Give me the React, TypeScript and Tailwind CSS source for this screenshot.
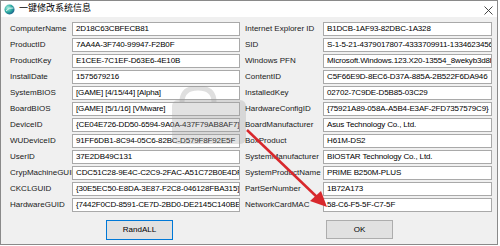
// App.tsx
const left = [
  ["ComputerName", "2D18C63CBFECB81"],
  ["ProductID", "7AA4A-3F740-99947-F2B0F"],
  ["ProductKey", "E1CEE-7C1EF-D63E6-4E10B"],
  ["InstallDate", "1575679216"],
  ["SystemBIOS", "[GAME] [4/15/44] [Alpha]"],
  ["BoardBIOS", "[GAME] [5/1/16] [VMware]"],
  ["DeviceID", "{CE04E726-DD50-6594-9A0A-437F79AB8AF7}"],
  ["WUDeviceID", "91FF6DB1-8C94-05C6-82BC-D579F8F92E5F"],
  ["UserID", "37E2DB49C131"],
  ["CrypMachineGUID", "CDC51C28-9E4C-C2C9-2FAC-A51C72B0E4DF"],
  ["CKCLGUID", "{30E5EC50-E8DA-3E87-F2C8-046128FBA315}"],
  ["HardwareGUID", "{7442F0CD-8591-CE7D-2BD0-DE2145C140BE}"],
];

const right = [
  ["Internet Explorer ID", "B1DCB-1AF93-82DBC-1A328"],
  ["SID", "S-1-5-21-4379017807-4333709911-1334623456"],
  ["Windows PFN", "Microsoft.Windows.123.X20-13554_8wekyb3d8bbwe"],
  ["ContentID", "C5F66E9D-8EC6-D37A-885A-2B522F6DA946"],
  ["InstalledKey", "02702-7C9DE-D5B85-03C29"],
  ["HardwareConfigID", "{75921A89-058A-A5B4-E3AF-2FD7357579C9}"],
  ["BoardManufacturer", "Asus Technology Co., Ltd."],
  ["BoxProduct", "H61M-DS2"],
  ["SystemManufacturer", "BIOSTAR Technology Co., Ltd."],
  ["SystemProductName", "PRIME B250M-PLUS"],
  ["PartSerNumber", "1B72A173"],
  ["NetworkCardMAC", "58-C6-F5-5F-C7-5F"],
];

function Field({ label, value, labelW, inputW }: { label: string; value: string; labelW: string; inputW: string }) {
  return (
    <div className="flex items-center h-[14px]">
      <div className={`${labelW} shrink-0 whitespace-nowrap text-[#1a1a1a]`}>{label}</div>
      <div className={`${inputW} relative h-[14px] shrink-0 bg-white border border-[#a9a9a9] pl-[3px] leading-[12px] whitespace-nowrap overflow-hidden text-black tracking-[-0.15px]`}>
        {value}
      </div>
    </div>
  );
}

export default function App() {
  return (
    <div className="relative w-[500px] h-[246px] bg-white overflow-hidden text-[8px]" style={{ fontFamily: '"Liberation Sans", "Noto Sans CJK SC", sans-serif' }}>
      <div className="w-[498px] h-[245px] border border-[#8a8a8a] flex flex-col">
        {/* title bar */}
        <div className="h-[16px] bg-white flex items-center pl-[3px] pr-[4px]">
          <svg width="11" height="11" viewBox="0 0 11 11" className="shrink-0">
            <defs>
              <radialGradient id="g" cx="35%" cy="35%" r="70%">
                <stop offset="0" stopColor="#a8f0e0" />
                <stop offset="0.6" stopColor="#2aa8a0" />
                <stop offset="1" stopColor="#1a5f8a" />
              </radialGradient>
            </defs>
            <circle cx="5.5" cy="5.5" r="5" fill="url(#g)" />
            <path d="M2 7 Q5 3 9.5 4" stroke="#ffffff" strokeWidth="1" fill="none" opacity="0.8" />
          </svg>
          <span className="ml-[4px] text-[9px] text-black">一键修改系统信息</span>
          <svg width="9" height="9" viewBox="0 0 9 9" className="ml-auto mt-[2px]">
            <path d="M0.5 0.5 L8.5 8.5 M8.5 0.5 L0.5 8.5" stroke="#333" strokeWidth="0.9" />
          </svg>
        </div>
        {/* body */}
        <div className="flex-1 bg-[#f0f0f0] pt-[5px] flex">
          <div className="pl-[9px] flex flex-col gap-[2px]">
            {left.map(([l, v]) => (
              <Field key={l} label={l} value={v} labelW="w-[62px]" inputW="w-[168px]" />
            ))}
            <div className="pl-[96px] pt-[6px]">
              <div className="w-[67px] h-[20px] bg-[#e1e1e1] border border-[#0078d7] flex items-center justify-center text-black">
                RandALL
              </div>
            </div>
          </div>
          <div className="pl-[5px] flex flex-col gap-[2px]">
            {right.map(([l, v]) => (
              <Field key={l} label={l} value={v} labelW="w-[78px]" inputW="w-[169px]" />
            ))}
            <div className="pl-[81px] pt-[6px]">
              <div className="w-[67px] h-[19px] bg-[#e1e1e1] border border-[#adadad] flex items-center justify-center text-black">
                OK
              </div>
            </div>
          </div>
        </div>
      </div>
      {/* watermark */}
      <svg className="absolute left-[168px] top-[86px] pointer-events-none" width="90" height="64" viewBox="0 0 90 64">
        <path d="M14 16 Q14 2 30 2 Q46 2 46 16" stroke="rgba(150,150,150,0.3)" strokeWidth="5" fill="none" />
        <rect x="4" y="14" width="74" height="44" rx="6" fill="rgba(160,160,160,0.3)" />
      </svg>
      {/* red arrow */}
      <svg className="absolute left-0 top-0 pointer-events-none" width="500" height="246" viewBox="0 0 500 246">
        <line x1="247" y1="130" x2="318" y2="198" stroke="#d8282c" strokeWidth="2.5" />
        <polygon points="327,207 310,201 321,191" fill="#d8282c" />
      </svg>
    </div>
  );
}
